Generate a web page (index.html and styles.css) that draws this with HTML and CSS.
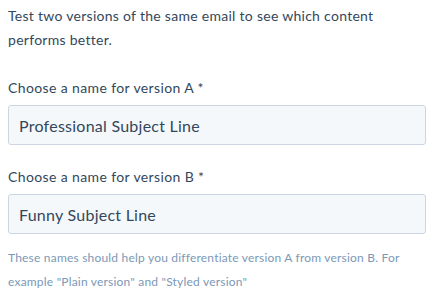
FILE: index.html
```html
<!DOCTYPE html>
<html lang="en">
<head>
  <meta charset="UTF-8">
  <meta name="viewport" content="width=device-width, initial-scale=1.0">
  <title>A/B Test</title>
  <link rel="stylesheet" href="styles.css">
</head>
<body>
  <div class="ab-form">
    <p class="intro">Test two versions of the same email to see which content performs better.</p>

    <div class="field">
      <label for="versionA">Choose a name for version A *</label>
      <input type="text" id="versionA" value="Professional Subject Line">
    </div>

    <div class="field">
      <label for="versionB">Choose a name for version B *</label>
      <input type="text" id="versionB" value="Funny Subject Line">
    </div>

    <p class="help">These names should help you differentiate version A from version B. For example "Plain version" and "Styled version"</p>
  </div>
</body>
</html>
```

FILE: styles.css
```css
body {
  margin: 4px 8px;
  background-color: #fff;
  color: #33475b;
  font-family: Lato, "Liberation Sans", sans-serif;
}
.ab-form {
  display: flex;
  flex-direction: column;
}
.intro {
  margin: 0 0 24px;
  font-size: 14px;
  line-height: 24px;
  letter-spacing: 0.28px;
}
.field {
  display: flex;
  flex-direction: column;
  gap: 5px;
  margin-bottom: 20px;
}
.field + .help {
  margin-top: -8px;
}
label {
  font-size: 14px;
  line-height: 24px;
  letter-spacing: 0.38px;
}
input {
  box-sizing: border-box;
  height: 40px;
  padding: 0 10px;
  background-color: #f5f8fa;
  border: 1px solid #cbd6e2;
  border-radius: 3px;
  color: #33475b;
  font-family: inherit;
  font-size: 16px;
  letter-spacing: 0.25px;
}
.help {
  margin: 0;
  font-size: 12px;
  line-height: 24px;
  letter-spacing: 0.2px;
  color: #7c98b6;
}
```
